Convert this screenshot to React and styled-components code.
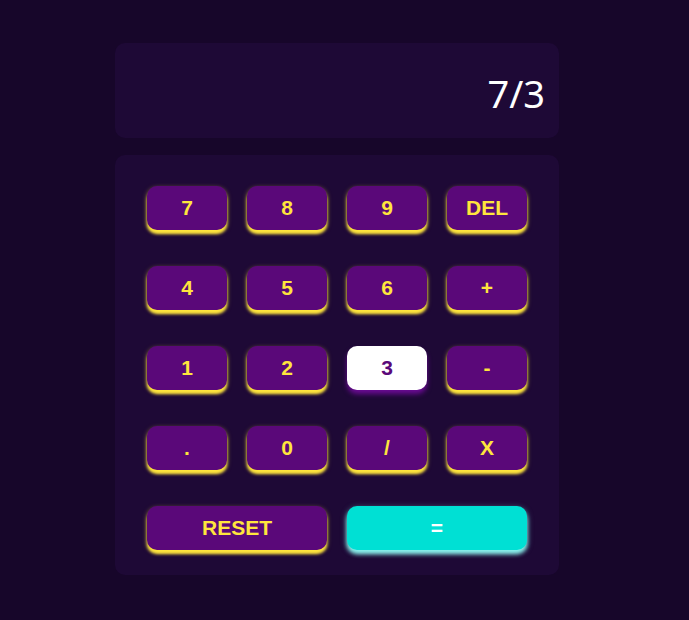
import React from "react";
import styled, { createGlobalStyle, css } from "styled-components";

const Global = createGlobalStyle`
  html, body { margin: 0; padding: 0; background: #17062a; }
  body { font-family: "Liberation Sans", Arial, sans-serif; }
`;

const Page = styled.div`
  min-height: 620px;
  padding: 43px 0 0 115px;
  box-sizing: border-box;
`;

const Calculator = styled.div`
  width: 444px;
  display: flex;
  flex-direction: column;
  gap: 17px;
`;

const Screen = styled.div`
  height: 95px;
  background: #1e0936;
  border-radius: 10px;
  display: flex;
  align-items: center;
  justify-content: flex-end;
  padding: 4px 14px 0 0;
  box-sizing: border-box;
  color: #ffffff;
  font-family: "Noto Sans", "DejaVu Sans", sans-serif;
  font-size: 38px;
`;

const Keypad = styled.div`
  background: #1e0936;
  border-radius: 10px;
  padding: 31px 32px 25px;
  display: grid;
  grid-template-columns: repeat(4, 80px);
  grid-auto-rows: 44px;
  column-gap: 20px;
  row-gap: 36px;
`;

const variants = {
  normal: css`
    background: #5a0879;
    color: #ffe53d;
    box-shadow: 0 4px 3px #ffe53d, 0 2px 5px rgba(255, 229, 61, 0.55);
  `,
  light: css`
    background: #ffffff;
    color: #5a0879;
    box-shadow: 0 4px 5px #6b0b94;
  `,
  accent: css`
    background: #00e0d4;
    color: #ffffff;
    box-shadow: 0 4px 4px #8af3ee, 0 2px 6px rgba(138, 243, 238, 0.5);
  `,
};

const Key = styled.button`
  border: none;
  border-radius: 10px;
  font-family: "Liberation Sans", Arial, sans-serif;
  font-weight: 700;
  font-size: 21px;
  padding: 0;
  cursor: pointer;
  grid-column: span ${(p) => p.$span || 1};
  ${(p) => variants[p.$variant || "normal"]}
`;

const keys = [
  ["7"], ["8"], ["9"], ["DEL"],
  ["4"], ["5"], ["6"], ["+"],
  ["1"], ["2"], ["3", "light"], ["-"],
  ["."], ["0"], ["/"], ["X"],
  ["RESET", "normal", 2], ["=", "accent", 2],
];

export default function App() {
  return (
    <>
      <Global />
      <Page>
        <Calculator>
          <Screen>7/3</Screen>
          <Keypad>
            {keys.map(([label, variant, span]) => (
              <Key key={label} $variant={variant} $span={span}>
                {label}
              </Key>
            ))}
          </Keypad>
        </Calculator>
      </Page>
    </>
  );
}
